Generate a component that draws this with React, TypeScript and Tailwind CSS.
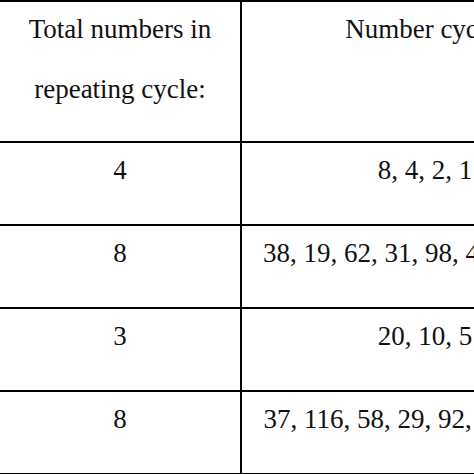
const rows = [
  { total: "4", cycle: "8, 4, 2, 1" },
  { total: "8", cycle: "38, 19, 62, 31, 98, 49, 152, 76" },
  { total: "3", cycle: "20, 10, 5" },
  { total: "8", cycle: "37, 116, 58, 29, 92, 46, 23, 74" },
];

export default function App() {
  return (
    <div className="w-[474px] h-[474px] overflow-hidden bg-white">
      <div
        className="w-[608px] text-[27px] leading-[60px] text-[#111] border-t-2 border-black"
        style={{ fontFamily: '"Liberation Serif", "Times New Roman", serif' }}
      >
        {/* Header */}
        <div className="grid grid-cols-[242px_366px] h-[141px] border-b-2 border-black">
          <div className="border-r-2 border-black text-center">
            <div className="-mt-[3px]">Total numbers in</div>
            <div>repeating cycle:</div>
          </div>
          <div className="text-center">
            <div className="-mt-[3px]">Number cycle:</div>
          </div>
        </div>

        {rows.map((row, i) => (
          <div
            key={i}
            className="grid grid-cols-[242px_366px] h-[83px] border-b-2 border-black"
          >
            <div className="border-r-2 border-black text-center">
              <div className="-mt-[3px]">{row.total}</div>
            </div>
            <div className="text-center whitespace-nowrap">
              <div className="-mt-[3px]">{row.cycle}</div>
            </div>
          </div>
        ))}
      </div>
    </div>
  );
}
